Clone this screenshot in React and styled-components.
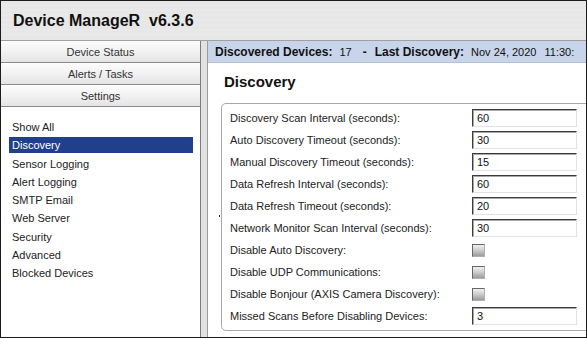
import React from "react";
import styled, { createGlobalStyle } from "styled-components";

const GlobalStyle = createGlobalStyle`
  html, body { margin: 0; padding: 0; background: #ffffff; }
  body { font-family: "Liberation Sans", Arial, sans-serif; }
  * { box-sizing: border-box; }
`;

const Frame = styled.div`
  width: 587px;
  height: 338px;
  border: 1px solid #1c1c1c;
  display: flex;
  flex-direction: column;
  overflow: hidden;
  background: #dedede;
`;

const Header = styled.header`
  height: 40px;
  flex: none;
  border-bottom: 1px solid #a0a0a0;
  padding-left: 12px;
  display: flex;
  align-items: center;
  background-color: #e8e8e8;
  background-image: repeating-linear-gradient(
    180deg,
    #ebebeb 0px,
    #e3e3e3 1px,
    #eaeaea 2px,
    #e5e5e5 3px,
    #ececec 4px,
    #e6e6e6 5px
  );
`;

const Title = styled.h1`
  margin: 0;
  font-size: 16px;
  font-weight: bold;
  color: #111;
  white-space: pre;
`;

const Main = styled.div`
  flex: 1;
  display: flex;
  min-height: 0;
`;

const Sidebar = styled.nav`
  width: 200px;
  flex: none;
  border-right: 1px solid #7c7c7c;
  background: #fff;
  display: flex;
  flex-direction: column;
`;

const Tab = styled.div`
  height: 22px;
  border-bottom: 1px solid #8a8a8a;
  border-top: 1px solid #fdfdfd;
  background: linear-gradient(180deg, #fbfbfb 0%, #f1f1f1 50%, #e4e4e4 100%);
  display: flex;
  align-items: center;
  justify-content: center;
  font-size: 11px;
  color: #333;
`;

const List = styled.ul`
  list-style: none;
  margin: 0;
  padding: 12px 7px 0 8px;
`;

const Item = styled.li`
  height: 16px;
  margin-bottom: 2.25px;
  padding-left: 3px;
  line-height: 16px;
  font-size: 11px;
  color: ${(p) => (p.$active ? "#ffffff" : "#222")};
  background: ${(p) => (p.$active ? "#223f8c" : "transparent")};
`;

const Splitter = styled.div`
  width: 6px;
  flex: none;
  background: #e2e2e2;
`;

const Panel = styled.section`
  flex: 1;
  min-width: 0;
  border-left: 1px solid #9c9c9c;
  background: #fff;
  display: flex;
  flex-direction: column;
  overflow: hidden;
`;

const InfoBar = styled.div`
  height: 22px;
  flex: none;
  background: #c7d4ea;
  border-bottom: 1px solid #b3c0d6;
  padding-left: 7px;
  display: flex;
  align-items: center;
  white-space: nowrap;
  overflow: hidden;
  color: #111;
`;

const InfoLabel = styled.span`
  font-size: 12px;
  font-weight: bold;
  margin-left: ${(p) => p.$gap || 0}px;
`;

const InfoValue = styled.span`
  font-size: 11px;
  margin-left: ${(p) => p.$gap || 0}px;
`;

const Body = styled.div`
  padding-left: 13px;
`;

const Heading = styled.h2`
  margin: 10px 0 12px 3px;
  font-size: 15px;
  line-height: 18px;
  font-weight: bold;
  color: #111;
`;

const Box = styled.div`
  position: relative;
  width: calc(100% + 20px);
  border: 1px solid #a9a9a9;
  border-radius: 5px;
  padding: 3px 0 3px 8px;

  &::before {
    content: "";
    position: absolute;
    left: -3px;
    top: 111px;
    width: 1px;
    height: 2px;
    background: #222;
  }
`;

const Row = styled.div`
  height: 22px;
  display: flex;
  align-items: center;
`;

const Label = styled.span`
  width: 242px;
  flex: none;
  font-size: 11px;
  color: #222;
`;

const TextInput = styled.input`
  width: 105px;
  height: 18px;
  margin: 0;
  padding: 0 0 0 4px;
  font-family: "Liberation Sans", Arial, sans-serif;
  font-size: 11px;
  color: #111;
  background: #fff;
  border: 1px solid;
  border-color: #3c3c3c #e2e2e2 #e2e2e2 #3c3c3c;
  box-shadow: inset 1px 1px 0 #a8a8a8;
  outline: none;
`;

const Check = styled.span`
  width: 13px;
  height: 13px;
  display: inline-block;
  border: 1px solid;
  border-color: #666 #b0b0b0 #b0b0b0 #666;
  background: linear-gradient(180deg, #f0f0f0 0%, #cfcfcf 45%, #9c9c9c 100%);
`;

const menu = [
  "Show All",
  "Discovery",
  "Sensor Logging",
  "Alert Logging",
  "SMTP Email",
  "Web Server",
  "Security",
  "Advanced",
  "Blocked Devices",
];

const settings = [
  { label: "Discovery Scan Interval (seconds):", value: "60" },
  { label: "Auto Discovery Timeout (seconds):", value: "30" },
  { label: "Manual Discovery Timeout (seconds):", value: "15" },
  { label: "Data Refresh Interval (seconds):", value: "60" },
  { label: "Data Refresh Timeout (seconds):", value: "20" },
  { label: "Network Monitor Scan Interval (seconds):", value: "30" },
  { label: "Disable Auto Discovery:", check: true },
  { label: "Disable UDP Communications:", check: true },
  { label: "Disable Bonjour (AXIS Camera Discovery):", check: true },
  { label: "Missed Scans Before Disabling Devices:", value: "3" },
];

export default function App() {
  return (
    <>
      <GlobalStyle />
      <Frame>
        <Header>
          <Title>{"Device ManageR  v6.3.6"}</Title>
        </Header>
        <Main>
          <Sidebar>
            <Tab>Device Status</Tab>
            <Tab>Alerts / Tasks</Tab>
            <Tab>Settings</Tab>
            <List>
              {menu.map((m) => (
                <Item key={m} $active={m === "Discovery"}>
                  {m}
                </Item>
              ))}
            </List>
          </Sidebar>
          <Splitter />
          <Panel>
            <InfoBar>
              <InfoLabel>Discovered Devices:</InfoLabel>
              <InfoValue $gap={7}>17</InfoValue>
              <InfoLabel $gap={11}>-</InfoLabel>
              <InfoLabel $gap={8}>Last Discovery:</InfoLabel>
              <InfoValue $gap={7}>Nov 24, 2020</InfoValue>
              <InfoValue $gap={8}>11:30:</InfoValue>
            </InfoBar>
            <Body>
              <Heading>Discovery</Heading>
              <Box>
                {settings.map((s) => (
                  <Row key={s.label}>
                    <Label>{s.label}</Label>
                    {s.check ? (
                      <Check />
                    ) : (
                      <TextInput defaultValue={s.value} />
                    )}
                  </Row>
                ))}
              </Box>
            </Body>
          </Panel>
        </Main>
      </Frame>
    </>
  );
}
